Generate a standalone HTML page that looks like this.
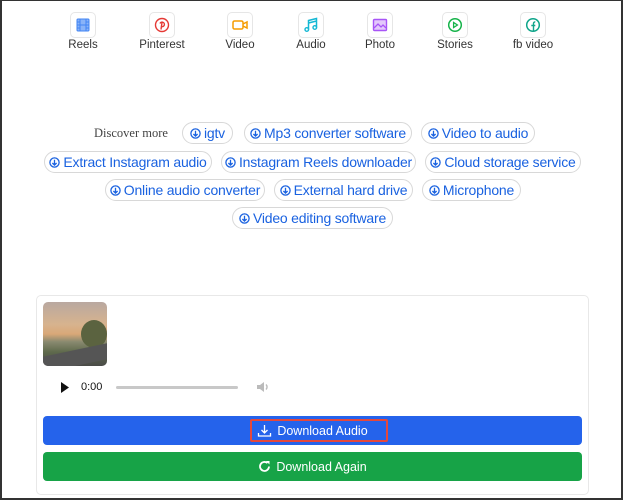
<!DOCTYPE html><html><head><style>
*{box-sizing:border-box;margin:0;padding:0}
body{width:623px;height:500px;overflow:hidden;background:#fff;font-family:"Liberation Sans",sans-serif;position:relative}
.frame{position:absolute;left:0;top:0;width:623px;height:500px;border:1px solid #333;border-left-width:2px;border-bottom-width:2px;border-right-width:2px;pointer-events:none}
.ic{position:absolute;top:12px;width:26px;height:26px;border:1px solid #e6e6e6;border-radius:5px;display:flex;align-items:center;justify-content:center}
.lb{position:absolute;top:39px;font-size:11.5px;color:#333;width:80px;text-align:center}
.chip{position:absolute;height:22px;border:1px solid #d8d8d8;border-radius:11px;color:#1a62e0;font-size:14px;font-weight:500;display:flex;align-items:center;justify-content:center;white-space:nowrap;letter-spacing:-0.2px}
.chip svg{margin-right:3px;flex:none}
.disc{position:absolute;left:94px;top:126px;font-family:"Liberation Serif",serif;font-size:12.5px;color:#444}
.card{position:absolute;left:36px;top:295px;width:553px;height:200px;border:1px solid #e8e8e8;border-radius:5px}
.btn{position:absolute;left:43px;width:539px;height:29px;border-radius:4px;color:#fff;font-size:12.5px;display:flex;align-items:center;justify-content:center}
</style></head><body>
<div class="ic" style="left:70px"><svg width="14" height="14" viewBox="0 0 14 14"><rect x="1" y="1" width="12" height="12" rx="1" fill="#8ab4f8" stroke="#4285f4"/><path d="M4 1v12M10 1v12M1 7h12M1 4h3M1 10h3M10 4h3M10 10h3" stroke="#4285f4"/></svg></div>
<div class="lb" style="left:43px">Reels</div>
<div class="ic" style="left:149px"><svg width="16" height="16" viewBox="0 0 16 16"><circle cx="8" cy="8" r="6.5" fill="none" stroke="#e53935" stroke-width="1.4"/><path d="M7 12.5L8 5.5M6 6.5a2.3 2.3 0 1 1 1.8 3.2" fill="none" stroke="#e53935" stroke-width="1.4"/></svg></div>
<div class="lb" style="left:122px">Pinterest</div>
<div class="ic" style="left:227px"><svg width="16" height="14" viewBox="0 0 16 14"><rect x="1" y="3" width="10" height="8" rx="1.5" fill="none" stroke="#f59c00" stroke-width="1.5"/><path d="M11 6l4-2v6l-4-2" fill="none" stroke="#f59c00" stroke-width="1.5"/></svg></div>
<div class="lb" style="left:200px">Video</div>
<div class="ic" style="left:298px"><svg width="16" height="16" viewBox="0 0 16 16"><path d="M5.5 12.5V3.5l8-2v9M5.5 6l8-2" fill="none" stroke="#14b8d4" stroke-width="1.5"/><circle cx="3.8" cy="12.5" r="1.8" fill="none" stroke="#14b8d4" stroke-width="1.4"/><circle cx="11.8" cy="10.5" r="1.8" fill="none" stroke="#14b8d4" stroke-width="1.4"/></svg></div>
<div class="lb" style="left:271px">Audio</div>
<div class="ic" style="left:367px"><svg width="16" height="14" viewBox="0 0 16 14"><rect x="1.5" y="1.5" width="13" height="11" rx="1" fill="#e3c8fb" stroke="#a855f7" stroke-width="1.4"/><path d="M2 10l4-4 3 3 2-2 3 3" fill="none" stroke="#a855f7" stroke-width="1.3"/></svg></div>
<div class="lb" style="left:340px">Photo</div>
<div class="ic" style="left:442px"><svg width="16" height="16" viewBox="0 0 16 16"><circle cx="8" cy="8" r="6.3" fill="none" stroke="#16b34a" stroke-width="1.5"/><path d="M6.6 5.5v5l3.8-2.5z" fill="none" stroke="#16b34a" stroke-width="1.3"/></svg></div>
<div class="lb" style="left:415px">Stories</div>
<div class="ic" style="left:520px"><svg width="16" height="16" viewBox="0 0 16 16"><circle cx="8" cy="8" r="6.3" fill="none" stroke="#0fa58a" stroke-width="1.5"/><path d="M8.5 14V6.5a1.5 1.5 0 0 1 1.8-1.5M6.3 8.5h4" fill="none" stroke="#0fa58a" stroke-width="1.4"/></svg></div>
<div class="lb" style="left:493px">fb video</div>

<div class="disc">Discover more</div>
<svg width="0" height="0" style="position:absolute"><defs><g id="pi"><circle cx="5.5" cy="5.5" r="4.6" fill="none" stroke="#1a62e0" stroke-width="1.3"/><path d="M5.5 2.8v5.2M3.4 6l2.1 2.1 2.1-2.1" fill="none" stroke="#1a62e0" stroke-width="1.3"/></g></defs></svg>
<div class="chip" style="left:182px;top:122px;width:51px"><svg width="11" height="11"><use href="#pi"/></svg>igtv</div>
<div class="chip" style="left:244px;top:122px;width:168px"><svg width="11" height="11"><use href="#pi"/></svg>Mp3 converter software</div>
<div class="chip" style="left:421px;top:122px;width:114px"><svg width="11" height="11"><use href="#pi"/></svg>Video to audio</div>
<div class="chip" style="left:44px;top:151px;width:168px"><svg width="11" height="11"><use href="#pi"/></svg>Extract Instagram audio</div>
<div class="chip" style="left:221px;top:151px;width:195px"><svg width="11" height="11"><use href="#pi"/></svg>Instagram Reels downloader</div>
<div class="chip" style="left:425px;top:151px;width:156px"><svg width="11" height="11"><use href="#pi"/></svg>Cloud storage service</div>
<div class="chip" style="left:105px;top:179px;width:160px"><svg width="11" height="11"><use href="#pi"/></svg>Online audio converter</div>
<div class="chip" style="left:274px;top:179px;width:139px"><svg width="11" height="11"><use href="#pi"/></svg>External hard drive</div>
<div class="chip" style="left:422px;top:179px;width:99px"><svg width="11" height="11"><use href="#pi"/></svg>Microphone</div>
<div class="chip" style="left:232px;top:207px;width:161px"><svg width="11" height="11"><use href="#pi"/></svg>Video editing software</div>

<div class="card"></div>
<div style="position:absolute;left:43px;top:302px;width:64px;height:64px;border-radius:5px;overflow:hidden;background:linear-gradient(180deg,#b9a8a0 0%,#d7b38e 35%,#d9a878 50%,#8a8a70 62%,#5f6a4c 78%,#4a4a48 100%)">
<div style="position:absolute;left:38px;top:18px;width:26px;height:28px;border-radius:50%;background:#5b6340"></div>
<div style="position:absolute;left:0;top:48px;width:64px;height:16px;background:#555;transform:skewY(-12deg)"></div></div>
<svg style="position:absolute;left:60px;top:382px" width="10" height="11"><path d="M1 0l8 5.5L1 11z" fill="#111"/></svg>
<div style="position:absolute;left:81px;top:381px;font-size:11px;color:#111">0:00</div>
<div style="position:absolute;left:116px;top:386px;width:122px;height:3px;background:#c8c8c8;border-radius:2px"></div>
<svg style="position:absolute;left:256px;top:381px" width="14" height="12"><path d="M1 4h3l4-3v10l-4-3H1z" fill="#bbb"/><path d="M10 3.5a3.5 3.5 0 0 1 0 5" stroke="#bbb" fill="none" stroke-width="1.4"/></svg>
<div class="btn" style="top:416px;background:#2563eb"><div style="border:2px solid #e5483c;border-radius:2px;width:138px;height:23px;position:absolute;left:207px;top:3px"></div><svg width="15" height="14" style="margin-right:5px" viewBox="0 0 15 14"><path d="M7.5 1v8M4.5 6l3 3 3-3M1.5 9v3h12V9" fill="none" stroke="#fff" stroke-width="1.3"/></svg>Download Audio</div>
<div class="btn" style="top:452px;background:#17a347"><svg width="13" height="13" style="margin-right:5px" viewBox="0 0 13 13"><path d="M11 6.5A4.5 4.5 0 1 1 9.5 3.1" fill="none" stroke="#fff" stroke-width="1.8"/><path d="M8 1h3.5v3.5z" fill="#fff"/></svg>Download Again</div>
<div class="frame"></div>
</body></html>
